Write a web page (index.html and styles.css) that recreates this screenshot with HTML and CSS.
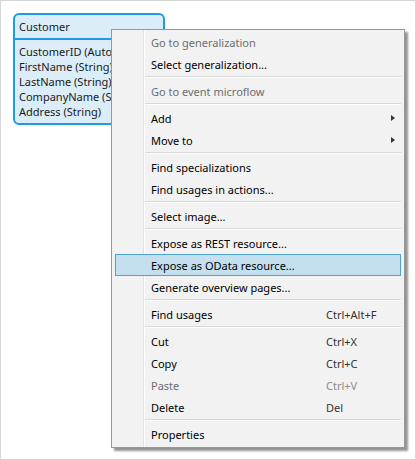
FILE: index.html
```html
<!DOCTYPE html>
<html>
<head>
<meta charset="utf-8">
<link rel="stylesheet" href="styles.css">
</head>
<body>
<div class="canvas">
  <div class="entity">
    <div class="entity-head">Customer</div>
    <div class="entity-attrs">
      <div class="attr">CustomerID (AutoNumber)</div>
      <div class="attr">FirstName (String)</div>
      <div class="attr">LastName (String)</div>
      <div class="attr">CompanyName (String)</div>
      <div class="attr">Address (String)</div>
    </div>
  </div>

  <div class="menu">
    <div class="item disabled"><span class="label">Go to generalization</span></div>
    <div class="item"><span class="label">Select generalization...</span></div>
    <div class="sep"></div>
    <div class="item disabled"><span class="label">Go to event microflow</span></div>
    <div class="sep"></div>
    <div class="item"><span class="label">Add</span><span class="arrow"></span></div>
    <div class="item"><span class="label">Move to</span><span class="arrow"></span></div>
    <div class="sep"></div>
    <div class="item"><span class="label">Find specializations</span></div>
    <div class="item"><span class="label">Find usages in actions...</span></div>
    <div class="sep"></div>
    <div class="item"><span class="label">Select image...</span></div>
    <div class="sep"></div>
    <div class="item"><span class="label">Expose as REST resource...</span></div>
    <div class="item active"><span class="label">Expose as OData resource...</span></div>
    <div class="item"><span class="label">Generate overview pages...</span></div>
    <div class="sep"></div>
    <div class="item"><span class="label">Find usages</span><span class="key">Ctrl+Alt+F</span></div>
    <div class="sep"></div>
    <div class="item"><span class="label">Cut</span><span class="key">Ctrl+X</span></div>
    <div class="item"><span class="label">Copy</span><span class="key">Ctrl+C</span></div>
    <div class="item disabled"><span class="label">Paste</span><span class="key">Ctrl+V</span></div>
    <div class="item"><span class="label">Delete</span><span class="key">Del</span></div>
    <div class="sep"></div>
    <div class="item"><span class="label">Properties</span></div>
  </div>
</div>
</body>
</html>
```

FILE: styles.css
```css
* { box-sizing: border-box; }

html, body {
  margin: 0;
  padding: 0;
  background: #ffffff;
}

body {
  font-family: "Noto Sans", "Open Sans", sans-serif;
  font-size: 11px;
  color: #000;
}

.canvas {
  position: relative;
  width: 416px;
  height: 460px;
  border: 1px solid #d6d6d6;
  background: #fff;
  overflow: hidden;
}

/* entity on the free canvas */
.entity {
  position: absolute;
  left: 12px;
  top: 12px;
  width: 152px;
  height: 112px;
  border: 2px solid #1e9be8;
  border-radius: 6px;
  background: #dbedf9;
  color: #1a1a1a;
}

.entity-head {
  height: 25px;
  line-height: 23px;
  padding-left: 4px;
  border-bottom: 2px solid #1e9be8;
  white-space: nowrap;
}

.entity-attrs {
  padding: 4px 0 0 4px;
}

.attr {
  height: 15px;
  line-height: 15px;
  white-space: nowrap;
}

/* context menu */
.menu {
  position: absolute;
  left: 110px;
  top: 28px;
  width: 294px;
  height: 419px;
  background: #f2f2f2 linear-gradient(to right, transparent 31px, #e2e2e2 31px, #e2e2e2 32px, #ffffff 32px, #ffffff 33px, transparent 33px);
  border: 1px solid #979797;
  box-shadow: 3px 3px 2px rgba(0, 0, 0, 0.42);
  padding-top: 1px;
}

.item {
  display: flex;
  align-items: center;
  height: 22px;
  margin: 0 3px;
  padding: 0 5px 0 35px;
  border: 1px solid transparent;
  white-space: nowrap;
}

.item.active {
  background: #c4e0ef;
  border-color: #4ea3d6;
}

.label {
  width: 175px;
  flex: none;
}

.key {
  color: #333;
}

.item.disabled .label {
  color: #6d6d6d;
}

.item.disabled .key {
  color: #8c8c8c;
}

.arrow {
  margin-left: auto;
  width: 0;
  height: 0;
  border-top: 3.5px solid transparent;
  border-bottom: 3.5px solid transparent;
  border-left: 4px solid #333;
}

.sep {
  height: 5px;
  margin: 0 3px 0 33px;
  padding-top: 1px;
}

.sep::before {
  content: "";
  display: block;
  height: 1px;
  background: #d7d7d7;
  border-bottom: 1px solid #fff;
  box-sizing: content-box;
}
```
